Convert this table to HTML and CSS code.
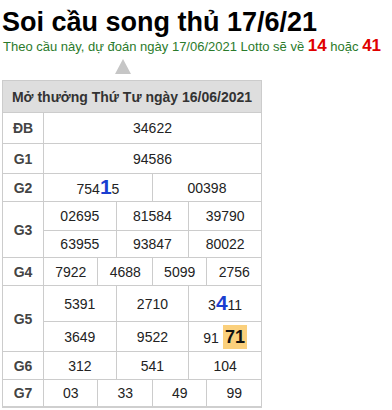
FILE: index.html
```html
<!DOCTYPE html>
<html lang="vi">
<head>
<meta charset="utf-8">
<link rel="stylesheet" href="styles.css">
</head>
<body>
<h1 class="title">Soi cầu song thủ 17/6/21</h1>
<p class="lead">Theo cầu này, dự đoán ngày 17/06/2021 Lotto sẽ về <b class="hot">14</b> hoặc <b class="hot">41</b></p>
<div class="arrow-row"><span class="arrow"></span></div>
<table class="kq">
<colgroup><col class="c-lbl"><col span="12"></colgroup>
<tr><th colspan="13" class="head">Mở thưởng Thứ Tư ngày 16/06/2021</th></tr>
<tr class="r31"><td class="lbl">ĐB</td><td colspan="12">34622</td></tr>
<tr class="r30"><td class="lbl">G1</td><td colspan="12">94586</td></tr>
<tr class="r28"><td class="lbl">G2</td><td colspan="6">754<b class="pick">1</b>5</td><td colspan="6">00398</td></tr>
<tr class="r29"><td class="lbl" rowspan="2">G3</td><td colspan="4">02695</td><td colspan="4">81584</td><td colspan="4">39790</td></tr>
<tr class="r27"><td colspan="4">63955</td><td colspan="4">93847</td><td colspan="4">80022</td></tr>
<tr class="r28"><td class="lbl">G4</td><td colspan="3">7922</td><td colspan="3">4688</td><td colspan="3">5099</td><td colspan="3">2756</td></tr>
<tr class="r36"><td class="lbl" rowspan="2">G5</td><td colspan="4">5391</td><td colspan="4">2710</td><td colspan="4">3<b class="pick">4</b>11</td></tr>
<tr class="r30"><td colspan="4">3649</td><td colspan="4">9522</td><td colspan="4">91<b class="lotto">71</b></td></tr>
<tr class="r28"><td class="lbl">G6</td><td colspan="4">312</td><td colspan="4">541</td><td colspan="4">104</td></tr>
<tr class="r27"><td class="lbl">G7</td><td colspan="3">03</td><td colspan="3">33</td><td colspan="3">49</td><td colspan="3">99</td></tr>
</table>
</body>
</html>
```

FILE: styles.css
```css
html, body {
  margin: 0;
  padding: 0;
  background: #fff;
}
body {
  padding: 0 2px;
  font-family: "Liberation Sans", Arial, sans-serif;
  color: #222;
}
.title {
  margin: 7px 0 0 0;
  font-size: 27px;
  line-height: 30px;
  font-weight: bold;
  color: #000;
}
.lead {
  margin: 0 0 0 1px;
  font-size: 13px;
  line-height: 18px;
  color: #2b7a2b;
  white-space: nowrap;
}
.hot {
  color: #e00000;
  font-size: 17px;
}
.arrow-row {
  height: 15px;
  margin-top: 3px;
  padding-left: 113px;
}
.arrow {
  display: block;
  width: 0;
  height: 0;
  border-left: 8px solid transparent;
  border-right: 8px solid transparent;
  border-bottom: 15px solid #c6c6c6;
}
.kq {
  margin-top: 6px;
  border-collapse: collapse;
  width: 260px;
  table-layout: fixed;
  border-bottom: 2px solid #cfcfcf;
}
.c-lbl {
  width: 41px;
}
.kq th, .kq td {
  border: 1px solid #cccccc;
  text-align: center;
  padding: 0;
  font-size: 14px;
  line-height: 16px;
}
.kq .head {
  height: 31px;
  background: #dedede;
  color: #333;
  font-weight: bold;
  font-size: 14px;
}
.kq .lbl {
  font-weight: bold;
  color: #444;
}
.r27 td { height: 26px; }
.r28 td { height: 27px; }
.r29 td { height: 28px; }
.r30 td { height: 29px; }
.r31 td { height: 30px; }
.r36 td { height: 35px; }
.pick {
  color: #1a3fd0;
  font-size: 21px;
  font-weight: bold;
}
.lotto {
  display: inline-block;
  margin-left: 4px;
  padding: 1px 2px;
  background: #fbd07c;
  color: #111;
  font-size: 18px;
  line-height: 22px;
  font-weight: bold;
}
```
